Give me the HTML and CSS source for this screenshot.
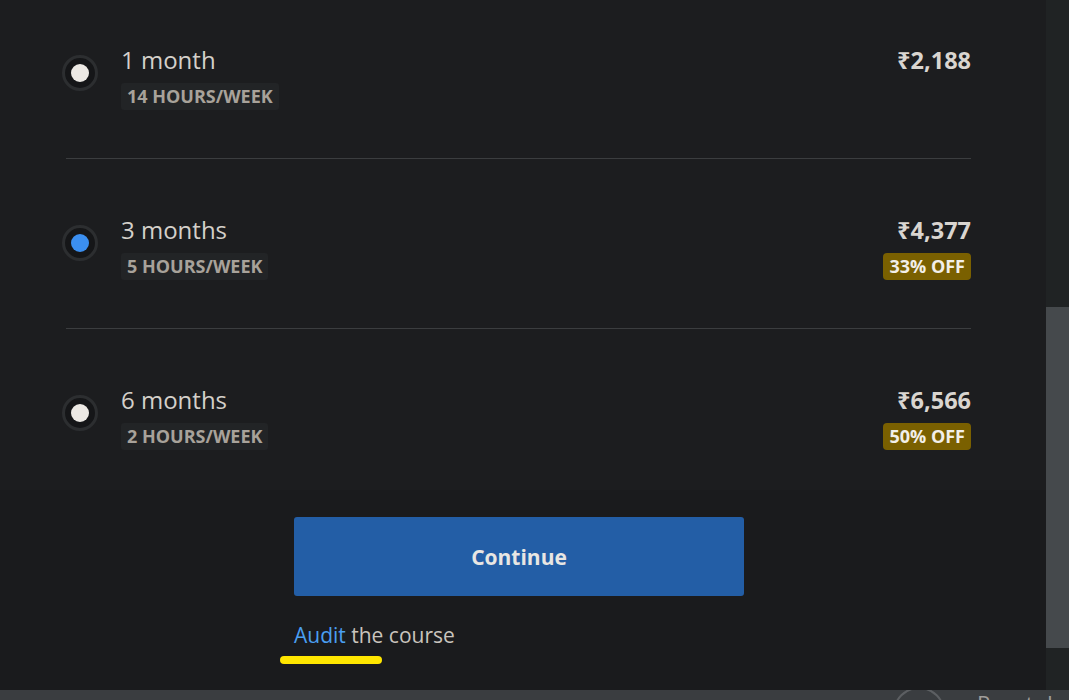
FILE: index.html
```html
<!DOCTYPE html>
<html>
<head>
<meta charset="utf-8">
<link rel="stylesheet" href="styles.css">
</head>
<body>
<div class="screen">
  <div class="dialog">
    <div class="list">
      <div class="row first">
        <div class="radio"><span class="dot"></span></div>
        <div class="info">
          <div class="title">1 month</div>
          <span class="tag">14 HOURS/WEEK</span>
        </div>
        <div class="pricing">
          <div class="price">₹2,188</div>
        </div>
      </div>
      <div class="row">
        <div class="radio"><span class="dot selected"></span></div>
        <div class="info">
          <div class="title">3 months</div>
          <span class="tag">5 HOURS/WEEK</span>
        </div>
        <div class="pricing">
          <div class="price">₹4,377</div>
          <span class="off">33% OFF</span>
        </div>
      </div>
      <div class="row last">
        <div class="radio"><span class="dot"></span></div>
        <div class="info">
          <div class="title">6 months</div>
          <span class="tag">2 HOURS/WEEK</span>
        </div>
        <div class="pricing">
          <div class="price">₹6,566</div>
          <span class="off">50% OFF</span>
        </div>
      </div>
    </div>
    <div class="footer">
      <button class="continue">Continue</button>
      <div class="audit"><span class="audit-link">Audit</span> the course</div>
      <div class="highlight"></div>
    </div>
  </div>
  <div class="scrollbar"><div class="thumb"></div></div>
</div>
<div class="behind">
  <span class="ring"></span>
  <span class="reset">Reset dea</span>
</div>
</body>
</html>
```

FILE: styles.css
```css
html, body {
  margin: 0;
  padding: 0;
  background: #1a1b1d;
  font-family: "Open Sans", "Noto Sans", sans-serif;
  overflow: hidden;
}

.screen {
  display: flex;
  height: 690px;
  width: 1069px;
}

.dialog {
  width: 1046px;
  display: flex;
  flex-direction: column;
}

.list {
  background: #1c1d1f;
  height: 490px;
  overflow: hidden;
}

.row {
  display: flex;
  align-items: flex-start;
  margin: 0 75px 0 66px;
  padding: 56px 0 48px;
  border-bottom: 1px solid #3b3d3f;
}

.row.first {
  padding-top: 45px;
}

.row.last {
  border-bottom: none;
  padding-bottom: 40px;
}

.radio {
  width: 30px;
  height: 30px;
  margin: 10px 0 0 -4px;
  border-radius: 50%;
  border: 3px solid #2c2e30;
  background: #151618;
  display: flex;
  align-items: center;
  justify-content: center;
  flex: none;
}

.dot {
  width: 18px;
  height: 18px;
  border-radius: 50%;
  background: #ece9e4;
}

.dot.selected {
  background: #3b8ff0;
}

.info {
  margin-left: 23px;
  flex: 1;
}

.title {
  font-size: 24px;
  line-height: 30px;
  color: #d4d0ca;
}

.tag {
  display: inline-block;
  margin-top: 8px;
  padding: 3px 6px 4px;
  font-size: 18px;
  line-height: 20px;
  font-weight: 700;
  color: #a8a29a;
  background: #222426;
  border-radius: 3px;
}

.pricing {
  text-align: right;
}

.price {
  font-size: 23.5px;
  line-height: 30px;
  font-weight: 700;
  color: #d9d5d0;
}

.off {
  display: inline-block;
  margin-top: 8px;
  padding: 3px 6px 4px;
  font-size: 18px;
  line-height: 20px;
  font-weight: 700;
  color: #f2efe9;
  background: #7a6000;
  border-radius: 4px;
}

.footer {
  flex: 1;
  background: #1a1b1d;
  padding: 27px 0 0 294px;
}

.continue {
  display: block;
  width: 450px;
  height: 79px;
  border: none;
  border-radius: 3px;
  background: #235ea6;
  color: #e8e6e3;
  font-family: "Open Sans", "Noto Sans", sans-serif;
  font-size: 21px;
  font-weight: 700;
  padding: 0;
}

.audit {
  margin-top: 24px;
  font-size: 21px;
  line-height: 30px;
  color: #c9c4bd;
}

.audit-link {
  color: #4a9ff0;
}

.highlight {
  width: 102px;
  height: 8px;
  margin: 6px 0 0 -14px;
  border-radius: 4px;
  background: #ffe600;
}

.scrollbar {
  width: 23px;
  background: #202324;
  padding-top: 307px;
  box-sizing: border-box;
}

.thumb {
  height: 341px;
  background: #45494c;
}

.behind {
  height: 10px;
  background: #3a3d40;
  overflow: hidden;
  display: flex;
  align-items: flex-start;
  padding-left: 893px;
}

.ring {
  flex: none;
  width: 48px;
  height: 48px;
  margin-top: -3px;
  border: 2px solid #5c5f62;
  border-radius: 50%;
}

.reset {
  margin: -2px 0 0 32px;
  font-size: 22px;
  line-height: 30px;
  color: #a09e9b;
  white-space: nowrap;
}
```
